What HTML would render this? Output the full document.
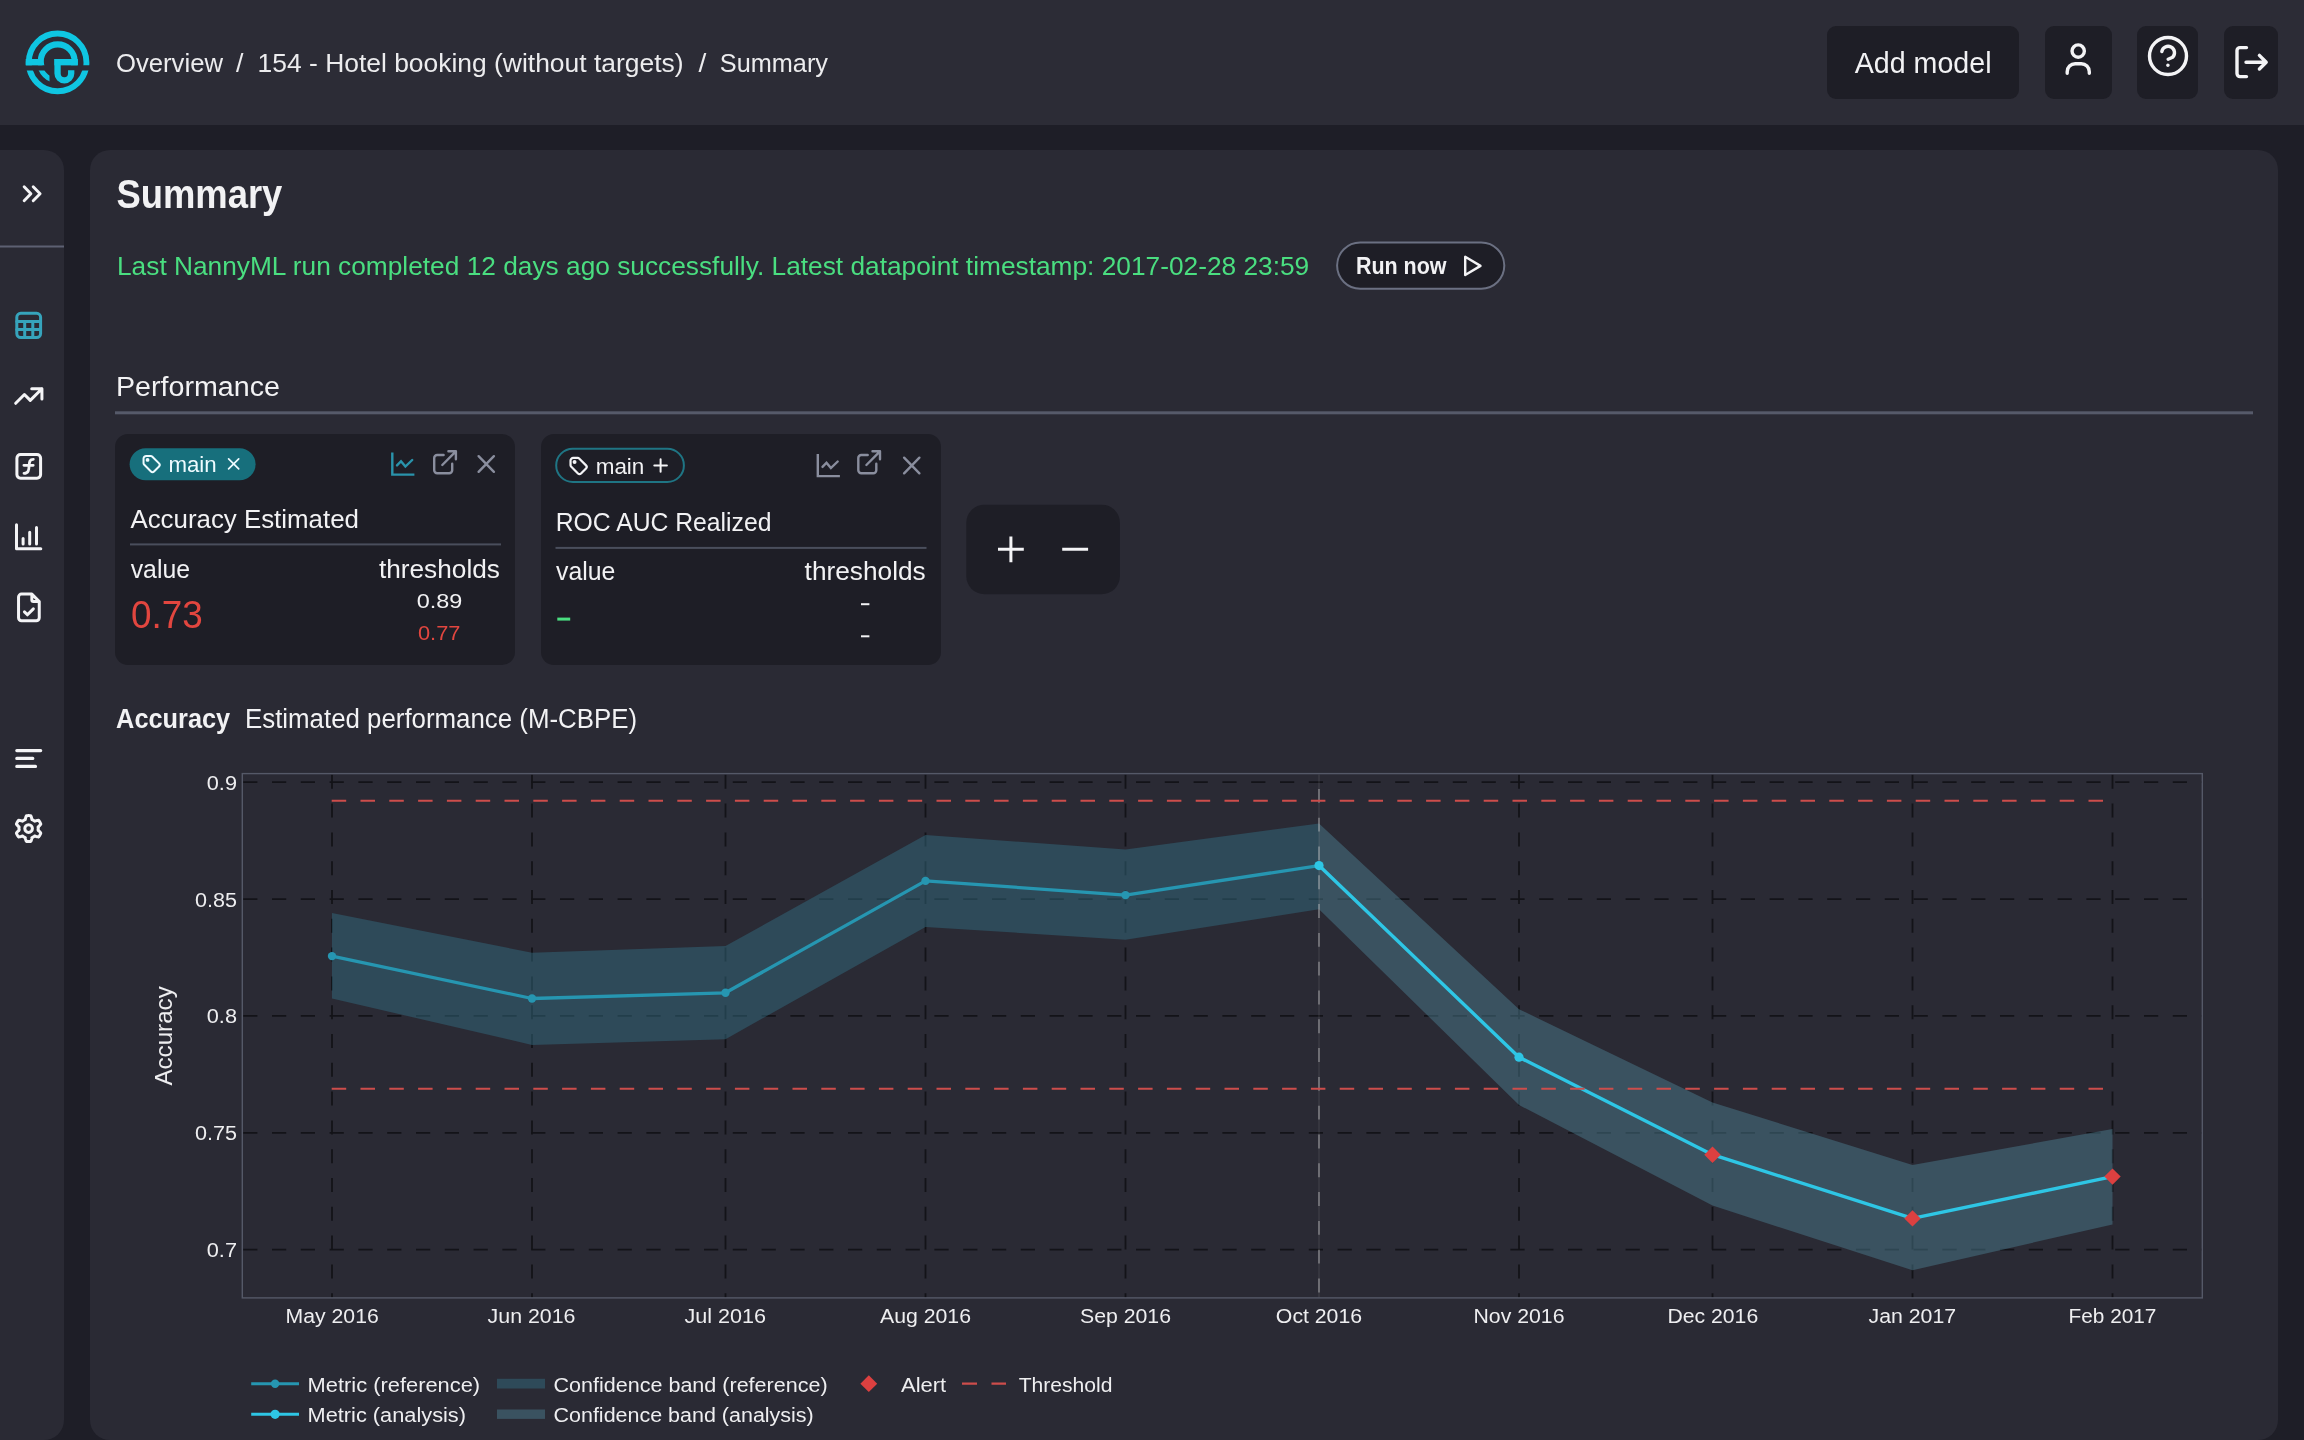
<!DOCTYPE html><html><head><meta charset="utf-8"><style>*{margin:0;padding:0}html,body{width:2304px;height:1440px;overflow:hidden;background:#1e1e27}svg{display:block;font-family:"Liberation Sans",sans-serif;will-change:transform}</style></head><body><svg width="2304" height="1440" viewBox="0 0 2304 1440">
<rect x="0" y="0" width="2304" height="1440" fill="#1e1e27"/>
<rect x="0" y="0" width="2304" height="125" fill="#2c2c36"/>
<rect x="-30" y="150" width="94" height="1290" rx="20" fill="#2a2a34"/>
<rect x="90" y="150" width="2188" height="1290" rx="20" fill="#2a2a34"/>
<defs><clipPath id="lgT"><rect x="0" y="0" width="110" height="65.35"/></clipPath><clipPath id="lgB"><rect x="0" y="70.45" width="110" height="60"/></clipPath><clipPath id="lgD"><rect x="0" y="70.45" width="49.5" height="60"/></clipPath></defs>
<g fill="none" stroke="#0fc6e2"><g clip-path="url(#lgT)"><circle cx="57.6" cy="62.4" r="28.85" stroke-width="5.9"/><circle cx="57.7" cy="61.4" r="16.95" stroke-width="6.2"/></g><g clip-path="url(#lgB)"><circle cx="57.6" cy="62.4" r="28.85" stroke-width="5.9"/></g><g clip-path="url(#lgD)"><circle cx="57.6" cy="62.4" r="17.9" stroke-width="5.2"/></g><path d="M57.55,59 V73.55 A6.82,6.82 0 0 0 71.2,73.55 V70.2" stroke-width="6.3"/></g><rect x="25.7" y="59" width="16.8" height="6.35" fill="#0fc6e2"/><rect x="54.4" y="59" width="23.5" height="6.35" fill="#0fc6e2"/>
<text x="116.00" y="72.30" font-size="26" fill="#ececee" textLength="106.94" lengthAdjust="spacingAndGlyphs">Overview</text>
<text x="236.00" y="72.30" font-size="26" fill="#ececee" textLength="7.44" lengthAdjust="spacingAndGlyphs">/</text>
<text x="257.60" y="72.30" font-size="26" fill="#ececee" textLength="425.90" lengthAdjust="spacingAndGlyphs">154 - Hotel booking (without targets)</text>
<text x="698.40" y="72.30" font-size="26" fill="#ececee" textLength="7.84" lengthAdjust="spacingAndGlyphs">/</text>
<text x="719.80" y="72.30" font-size="26" fill="#ececee" textLength="108.16" lengthAdjust="spacingAndGlyphs">Summary</text>
<rect x="1827" y="26" width="192" height="73" rx="9" fill="#1e1e26"/>
<rect x="2045" y="26" width="67" height="73" rx="9" fill="#1e1e26"/>
<rect x="2137" y="26" width="61" height="73" rx="9" fill="#1e1e26"/>
<rect x="2224" y="26" width="54" height="73" rx="9" fill="#1e1e26"/>
<text x="1854.70" y="73.40" font-size="29" fill="#f2f2f4" textLength="136.83" lengthAdjust="spacingAndGlyphs">Add model</text>
<g fill="none" stroke="#f4f4f6" stroke-width="3.4" stroke-linecap="round" stroke-linejoin="round"><circle cx="2078.2" cy="51.05" r="6.15"/><path d="M2067.2,73.3 V71.7 A8,8 0 0 1 2075.2,63.7 H2081.3 A8,8 0 0 1 2089.3,71.7 V73.3"/></g>
<g fill="none" stroke="#f4f4f6" stroke-width="3.4" stroke-linecap="round" stroke-linejoin="round"><circle cx="2168" cy="56" r="18.5"/><path d="M2161.8,51.6 A6.4,6.4 0 1 1 2172.6,57.3 L2168.1,59.2"/><path d="M2167.9,65.1 v0.2"/></g>
<g fill="none" stroke="#f4f4f6" stroke-width="3.4" stroke-linecap="round" stroke-linejoin="round"><path d="M2246.5,47.6 H2240 A3,3 0 0 0 2237,50.6 V73.6 A3,3 0 0 0 2240,76.6 H2246.5"/><path d="M2246,62.2 H2266.2 M2259.4,55.4 L2266.2,62.2 L2259.4,69"/></g>
<path d="M24.15,186.7 L30.9,193.7 L24.15,200.7 M33.2,186.7 L40.1,193.7 L33.2,200.7" fill="none" stroke="#f4f4f6" stroke-width="2.9" stroke-linecap="round" stroke-linejoin="round"/>
<rect x="0" y="245.5" width="64" height="2" fill="#5d6072"/>
<g fill="none" stroke="#36a4bc" stroke-width="3" stroke-linecap="round" stroke-linejoin="round"><rect x="16.8" y="313.3" width="23.8" height="24.2" rx="4"/><path d="M16.8,321.4 H40.6 M16.8,329.4 H40.6 M24.7,321.4 V337.5 M32.8,321.4 V337.5"/></g>
<g transform="translate(11.30,378.50) scale(1.4583)" fill="none" stroke="#f4f4f6" stroke-width="2.057" stroke-linecap="round" stroke-linejoin="round"><path d="M3 17l6 -6l4 4l8 -8 M14 7l7 0l0 7"/></g>
<g fill="none" stroke="#f4f4f6" stroke-width="3" stroke-linecap="round" stroke-linejoin="round"><rect x="16.9" y="454.6" width="23.7" height="23.6" rx="3.6"/><path d="M23.9,465.3 H33.2 M24,473.3 C28.4,473.3 28.9,470.2 29.1,466 C29.3,461.6 29.8,459.3 33.3,459.3" stroke-width="2.8"/></g>
<g fill="none" stroke="#f4f4f6" stroke-width="3" stroke-linecap="round" stroke-linejoin="round"><path d="M16.5,524.8 V548.8 H40.8 M23.1,538.5 V544 M29.7,532.3 V544 M36.5,527.5 V544"/></g>
<g transform="translate(11.15,589.65) scale(1.4792)" fill="none" stroke="#f4f4f6" stroke-width="2.028" stroke-linecap="round" stroke-linejoin="round"><path d="M14 3v4a1 1 0 0 0 1 1h4 M17 21h-10a2 2 0 0 1 -2 -2v-14a2 2 0 0 1 2 -2h7l5 5v11a2 2 0 0 1 -2 2z M9 15l2 2l4 -4"/></g>
<g fill="none" stroke="#f4f4f6" stroke-width="3.2" stroke-linecap="round"><path d="M16.8,750.6 H40.7 M16.8,758.4 H32.8 M16.8,766.4 H35.5"/></g>
<path d="M38.20,828.60 L38.20,828.77 L38.19,828.94 L38.19,829.10 L38.18,829.27 L38.16,829.44 L38.15,829.60 L38.13,829.77 L38.11,829.94 L38.08,830.10 L38.14,830.28 L38.40,830.51 L38.68,830.74 L38.96,830.99 L39.24,831.25 L39.51,831.52 L39.79,831.81 L40.05,832.10 L40.30,832.40 L40.53,832.71 L40.74,833.02 L40.74,833.26 L40.65,833.47 L40.57,833.68 L40.48,833.89 L40.38,834.09 L40.28,834.30 L40.18,834.50 L40.08,834.70 L39.97,834.90 L39.86,835.10 L39.74,835.30 L39.62,835.49 L39.50,835.68 L39.38,835.87 L39.25,836.06 L39.12,836.24 L38.98,836.42 L38.84,836.60 L38.70,836.78 L38.49,836.90 L38.12,836.88 L37.74,836.83 L37.36,836.76 L36.97,836.68 L36.59,836.59 L36.22,836.49 L35.85,836.37 L35.49,836.26 L35.15,836.14 L34.83,836.02 L34.64,836.06 L34.51,836.16 L34.38,836.27 L34.24,836.37 L34.11,836.46 L33.97,836.56 L33.83,836.65 L33.69,836.74 L33.54,836.83 L33.40,836.91 L33.25,837.00 L33.11,837.08 L32.96,837.15 L32.81,837.23 L32.66,837.30 L32.50,837.37 L32.35,837.44 L32.20,837.50 L32.04,837.56 L31.91,837.70 L31.85,838.04 L31.78,838.40 L31.71,838.76 L31.62,839.14 L31.52,839.51 L31.42,839.89 L31.29,840.26 L31.16,840.63 L31.01,840.98 L30.84,841.32 L30.63,841.44 L30.41,841.47 L30.18,841.50 L29.96,841.53 L29.73,841.55 L29.51,841.57 L29.28,841.58 L29.05,841.59 L28.83,841.60 L28.60,841.60 L28.37,841.60 L28.15,841.59 L27.92,841.58 L27.69,841.57 L27.47,841.55 L27.24,841.53 L27.02,841.50 L26.79,841.47 L26.57,841.44 L26.36,841.32 L26.19,840.98 L26.04,840.63 L25.91,840.26 L25.78,839.89 L25.68,839.51 L25.58,839.14 L25.49,838.76 L25.42,838.40 L25.35,838.04 L25.29,837.70 L25.16,837.56 L25.00,837.50 L24.85,837.44 L24.70,837.37 L24.54,837.30 L24.39,837.23 L24.24,837.15 L24.09,837.08 L23.95,837.00 L23.80,836.91 L23.66,836.83 L23.51,836.74 L23.37,836.65 L23.23,836.56 L23.09,836.46 L22.96,836.37 L22.82,836.27 L22.69,836.16 L22.56,836.06 L22.37,836.02 L22.05,836.14 L21.71,836.26 L21.35,836.37 L20.98,836.49 L20.61,836.59 L20.23,836.68 L19.84,836.76 L19.46,836.83 L19.08,836.88 L18.71,836.90 L18.50,836.78 L18.36,836.60 L18.22,836.42 L18.08,836.24 L17.95,836.06 L17.82,835.87 L17.70,835.68 L17.58,835.49 L17.46,835.30 L17.34,835.10 L17.23,834.90 L17.12,834.70 L17.02,834.50 L16.92,834.30 L16.82,834.09 L16.72,833.89 L16.63,833.68 L16.55,833.47 L16.46,833.26 L16.46,833.02 L16.67,832.71 L16.90,832.40 L17.15,832.10 L17.41,831.81 L17.69,831.52 L17.96,831.25 L18.24,830.99 L18.52,830.74 L18.80,830.51 L19.06,830.28 L19.12,830.10 L19.09,829.94 L19.07,829.77 L19.05,829.60 L19.04,829.44 L19.02,829.27 L19.01,829.10 L19.01,828.94 L19.00,828.77 L19.00,828.60 L19.00,828.43 L19.01,828.26 L19.01,828.10 L19.02,827.93 L19.04,827.76 L19.05,827.60 L19.07,827.43 L19.09,827.26 L19.12,827.10 L19.06,826.92 L18.80,826.69 L18.52,826.46 L18.24,826.21 L17.96,825.95 L17.69,825.68 L17.41,825.39 L17.15,825.10 L16.90,824.80 L16.67,824.49 L16.46,824.18 L16.46,823.94 L16.55,823.73 L16.63,823.52 L16.72,823.31 L16.82,823.11 L16.92,822.90 L17.02,822.70 L17.12,822.50 L17.23,822.30 L17.34,822.10 L17.46,821.90 L17.58,821.71 L17.70,821.52 L17.82,821.33 L17.95,821.14 L18.08,820.96 L18.22,820.78 L18.36,820.60 L18.50,820.42 L18.71,820.30 L19.08,820.32 L19.46,820.37 L19.84,820.44 L20.23,820.52 L20.61,820.61 L20.98,820.71 L21.35,820.83 L21.71,820.94 L22.05,821.06 L22.37,821.18 L22.56,821.14 L22.69,821.04 L22.82,820.93 L22.96,820.83 L23.09,820.74 L23.23,820.64 L23.37,820.55 L23.51,820.46 L23.66,820.37 L23.80,820.29 L23.95,820.20 L24.09,820.12 L24.24,820.05 L24.39,819.97 L24.54,819.90 L24.70,819.83 L24.85,819.76 L25.00,819.70 L25.16,819.64 L25.29,819.50 L25.35,819.16 L25.42,818.80 L25.49,818.44 L25.58,818.06 L25.68,817.69 L25.78,817.31 L25.91,816.94 L26.04,816.57 L26.19,816.22 L26.36,815.88 L26.57,815.76 L26.79,815.73 L27.02,815.70 L27.24,815.67 L27.47,815.65 L27.69,815.63 L27.92,815.62 L28.15,815.61 L28.37,815.60 L28.60,815.60 L28.83,815.60 L29.05,815.61 L29.28,815.62 L29.51,815.63 L29.73,815.65 L29.96,815.67 L30.18,815.70 L30.41,815.73 L30.63,815.76 L30.84,815.88 L31.01,816.22 L31.16,816.57 L31.29,816.94 L31.42,817.31 L31.52,817.69 L31.62,818.06 L31.71,818.44 L31.78,818.80 L31.85,819.16 L31.91,819.50 L32.04,819.64 L32.20,819.70 L32.35,819.76 L32.50,819.83 L32.66,819.90 L32.81,819.97 L32.96,820.05 L33.11,820.12 L33.25,820.20 L33.40,820.29 L33.54,820.37 L33.69,820.46 L33.83,820.55 L33.97,820.64 L34.11,820.74 L34.24,820.83 L34.38,820.93 L34.51,821.04 L34.64,821.14 L34.83,821.18 L35.15,821.06 L35.49,820.94 L35.85,820.83 L36.22,820.71 L36.59,820.61 L36.97,820.52 L37.36,820.44 L37.74,820.37 L38.12,820.32 L38.49,820.30 L38.70,820.42 L38.84,820.60 L38.98,820.78 L39.12,820.96 L39.25,821.14 L39.38,821.33 L39.50,821.52 L39.62,821.71 L39.74,821.90 L39.86,822.10 L39.97,822.30 L40.08,822.50 L40.18,822.70 L40.28,822.90 L40.38,823.11 L40.48,823.31 L40.57,823.52 L40.65,823.73 L40.74,823.94 L40.74,824.18 L40.53,824.49 L40.30,824.80 L40.05,825.10 L39.79,825.39 L39.51,825.68 L39.24,825.95 L38.96,826.21 L38.68,826.46 L38.40,826.69 L38.14,826.92 L38.08,827.10 L38.11,827.26 L38.13,827.43 L38.15,827.60 L38.16,827.76 L38.18,827.93 L38.19,828.10 L38.19,828.26 L38.20,828.43 L38.20,828.60Z" fill="none" stroke="#f4f4f6" stroke-width="3" stroke-linejoin="round"/>
<circle cx="28.6" cy="828.6" r="3.8" fill="none" stroke="#f4f4f6" stroke-width="3"/>
<text x="116.40" y="208.30" font-size="40" fill="#f2f2f4" font-weight="bold" textLength="165.91" lengthAdjust="spacingAndGlyphs">Summary</text>
<text x="117.00" y="275.20" font-size="26" fill="#4ade80" textLength="1192.22" lengthAdjust="spacingAndGlyphs">Last NannyML run completed 12 days ago successfully. Latest datapoint timestamp: 2017-02-28 23:59</text>
<rect x="1337.1" y="242.5" width="167.2" height="46.2" rx="23.1" fill="#1e1e26" stroke="#6b7082" stroke-width="2"/>
<text x="1355.90" y="274.10" font-size="24" fill="#f2f2f4" font-weight="bold" textLength="90.62" lengthAdjust="spacingAndGlyphs">Run now</text>
<path d="M1465.2,256.8 V275 L1480.5,265.9 Z" fill="none" stroke="#f4f4f6" stroke-width="2.4" stroke-linejoin="round"/>
<text x="116.00" y="396.00" font-size="27" fill="#f2f2f4" textLength="164.00" lengthAdjust="spacingAndGlyphs">Performance</text>
<rect x="115" y="411.3" width="2138" height="3" fill="#565a6a"/>
<rect x="115" y="434" width="400" height="231" rx="13" fill="#1e1e26"/>
<rect x="541" y="434" width="400" height="231" rx="13" fill="#1e1e26"/>
<rect x="129.6" y="448.2" width="126" height="32" rx="16" fill="#176f7c"/>
<g transform="translate(140.85,453.25) scale(0.8958)" fill="none" stroke="#eefbff" stroke-width="2.233" stroke-linecap="round" stroke-linejoin="round"><path d="M7.5 7.5m-1 0a1 1 0 1 0 2 0a1 1 0 1 0 -2 0 M3 6v5.172a2 2 0 0 0 .586 1.414l7.71 7.71a2.41 2.41 0 0 0 3.408 0l5.592 -5.592a2.41 2.41 0 0 0 0 -3.408l-7.71 -7.71a2 2 0 0 0 -1.414 -.586h-5.172a3 3 0 0 0 -3 3z"/></g>
<text x="168.40" y="472.20" font-size="22" fill="#eefbff" textLength="48.25" lengthAdjust="spacingAndGlyphs">main</text>
<path d="M228.6,458.8 L238.7,468.9 M238.7,458.8 L228.6,468.9" stroke="#eefbff" stroke-width="1.7" stroke-linecap="round"/>
<g fill="none" stroke="#2a93ab" stroke-width="2.4" stroke-linecap="butt" stroke-linejoin="miter"><path d="M392.3,452.4 V474.6 H414.4"/><path d="M397,465.4 L401,461.2 L405.4,466.6 L412.2,460" stroke-linecap="round"/></g>
<g fill="none" stroke="#8a8e9e" stroke-width="2.4" stroke-linecap="round" stroke-linejoin="round"><path d="M443.6,455 H437.2 A3,3 0 0 0 434.2,458 V470.3 A3,3 0 0 0 437.2,473.3 H449.2 A3,3 0 0 0 452.2,470.3 V463.7"/><path d="M442.3,465 L455.6,451.7 M448.4,451.3 H455.9 V459.3"/><path d="M478.6,456.2 L493.9,471.8 M493.9,456.2 L478.6,471.8"/></g>
<text x="130.40" y="528.20" font-size="26" fill="#f2f2f4" textLength="228.54" lengthAdjust="spacingAndGlyphs">Accuracy Estimated</text>
<rect x="130" y="543.4" width="371" height="2" fill="#4a4e5c"/>
<text x="130.70" y="577.80" font-size="25" fill="#f2f2f4" textLength="59.32" lengthAdjust="spacingAndGlyphs">value</text>
<text x="378.90" y="577.80" font-size="26" fill="#f2f2f4" textLength="121.07" lengthAdjust="spacingAndGlyphs">thresholds</text>
<text x="131.00" y="627.80" font-size="38" fill="#e2463f" textLength="71.75" lengthAdjust="spacingAndGlyphs">0.73</text>
<text x="416.70" y="607.80" font-size="21" fill="#f2f2f4" textLength="45.53" lengthAdjust="spacingAndGlyphs">0.89</text>
<text x="418.00" y="640.00" font-size="21" fill="#e2463f" textLength="42.43" lengthAdjust="spacingAndGlyphs">0.77</text>
<rect x="556.2" y="448.8" width="127.7" height="33.2" rx="16.6" fill="none" stroke="#1f7584" stroke-width="2"/>
<g transform="translate(567.85,455.25) scale(0.8958)" fill="none" stroke="#f4f4f6" stroke-width="2.456" stroke-linecap="round" stroke-linejoin="round"><path d="M7.5 7.5m-1 0a1 1 0 1 0 2 0a1 1 0 1 0 -2 0 M3 6v5.172a2 2 0 0 0 .586 1.414l7.71 7.71a2.41 2.41 0 0 0 3.408 0l5.592 -5.592a2.41 2.41 0 0 0 0 -3.408l-7.71 -7.71a2 2 0 0 0 -1.414 -.586h-5.172a3 3 0 0 0 -3 3z"/></g>
<text x="595.70" y="473.70" font-size="22" fill="#f2f2f4" textLength="48.65" lengthAdjust="spacingAndGlyphs">main</text>
<path d="M660.6,459.2 V471.8 M654.3,465.5 H666.9" stroke="#f4f4f6" stroke-width="2" stroke-linecap="round"/>
<g fill="none" stroke="#8a8e9e" stroke-width="2.4" stroke-linecap="butt" stroke-linejoin="miter"><path d="M817.8,453.9 V476.1 H839.9"/><path d="M822.5,466.9 L826.5,462.7 L830.9,468.1 L837.7,461.5" stroke-linecap="round"/></g>
<g fill="none" stroke="#8a8e9e" stroke-width="2.4" stroke-linecap="round" stroke-linejoin="round"><path d="M867.7,455 H861.3 A3,3 0 0 0 858.3,458 V470.3 A3,3 0 0 0 861.3,473.3 H873.3 A3,3 0 0 0 876.3,470.3 V463.7"/><path d="M866.4000000000001,465 L879.7,451.7 M872.5,451.3 H880.0 V459.3"/><path d="M904.1,457.7 L919.4,473.3 M919.4,457.7 L904.1,473.3"/></g>
<text x="555.70" y="531.20" font-size="26" fill="#f2f2f4" textLength="215.81" lengthAdjust="spacingAndGlyphs">ROC AUC Realized</text>
<rect x="555.5" y="546.9" width="371" height="2" fill="#4a4e5c"/>
<text x="556.00" y="580.20" font-size="25" fill="#f2f2f4" textLength="59.32" lengthAdjust="spacingAndGlyphs">value</text>
<text x="804.60" y="580.20" font-size="26" fill="#f2f2f4" textLength="121.17" lengthAdjust="spacingAndGlyphs">thresholds</text>
<rect x="557.3" y="617.6" width="12.9" height="3" fill="#4ade80"/>
<rect x="861" y="603.2" width="8.4" height="2" fill="#f2f2f4"/>
<rect x="861" y="635.3" width="8.4" height="2" fill="#f2f2f4"/>
<rect x="966.3" y="504.7" width="153.6" height="89.5" rx="18" fill="#1e1e26"/>
<path d="M1010.9,536.5 V562.2 M998,549.3 H1023.8 M1062.2,549.3 H1088.1" stroke="#f4f4f6" stroke-width="3" stroke-linecap="butt"/>
<text x="116.10" y="727.80" font-size="27" fill="#f2f2f4" font-weight="bold" textLength="114.05" lengthAdjust="spacingAndGlyphs">Accuracy</text>
<text x="245.00" y="727.80" font-size="27" fill="#f2f2f4" textLength="392.04" lengthAdjust="spacingAndGlyphs">Estimated performance (M-CBPE)</text>
<line x1="243.2" y1="782.2" x2="2202.3" y2="782.2" stroke="#131318" stroke-width="1.8" stroke-dasharray="14.2 14.6"/>
<line x1="243.2" y1="899.1" x2="2202.3" y2="899.1" stroke="#131318" stroke-width="1.8" stroke-dasharray="14.2 14.6"/>
<line x1="243.2" y1="1015.95" x2="2202.3" y2="1015.95" stroke="#131318" stroke-width="1.8" stroke-dasharray="14.2 14.6"/>
<line x1="243.2" y1="1132.8" x2="2202.3" y2="1132.8" stroke="#131318" stroke-width="1.8" stroke-dasharray="14.2 14.6"/>
<line x1="243.2" y1="1249.7" x2="2202.3" y2="1249.7" stroke="#131318" stroke-width="1.8" stroke-dasharray="14.2 14.6"/>
<line x1="332.0" y1="774.8" x2="332.0" y2="1297.9" stroke="#131318" stroke-width="1.8" stroke-dasharray="14.0 14.8"/>
<line x1="532.0" y1="774.8" x2="532.0" y2="1297.9" stroke="#131318" stroke-width="1.8" stroke-dasharray="14.0 14.8"/>
<line x1="725.5" y1="774.8" x2="725.5" y2="1297.9" stroke="#131318" stroke-width="1.8" stroke-dasharray="14.0 14.8"/>
<line x1="925.5" y1="774.8" x2="925.5" y2="1297.9" stroke="#131318" stroke-width="1.8" stroke-dasharray="14.0 14.8"/>
<line x1="1125.5" y1="774.8" x2="1125.5" y2="1297.9" stroke="#131318" stroke-width="1.8" stroke-dasharray="14.0 14.8"/>
<line x1="1519.0" y1="774.8" x2="1519.0" y2="1297.9" stroke="#131318" stroke-width="1.8" stroke-dasharray="14.0 14.8"/>
<line x1="1712.5" y1="774.8" x2="1712.5" y2="1297.9" stroke="#131318" stroke-width="1.8" stroke-dasharray="14.0 14.8"/>
<line x1="1912.5" y1="774.8" x2="1912.5" y2="1297.9" stroke="#131318" stroke-width="1.8" stroke-dasharray="14.0 14.8"/>
<line x1="2112.5" y1="774.8" x2="2112.5" y2="1297.9" stroke="#131318" stroke-width="1.8" stroke-dasharray="14.0 14.8"/>
<polygon points="332.0,913.1 532.0,952.7 725.5,946.1 925.5,835.0 1125.5,849.6 1319.0,823.5 1319.0,909.2 1125.5,939.8 925.5,926.9 725.5,1039.2 532.0,1044.9 332.0,998.5" fill="#326a7e" fill-opacity="0.5"/>
<polygon points="1319.0,823.5 1519.0,1009.2 1712.5,1102.5 1912.5,1165.0 2112.5,1129.0 2112.5,1224.4 1912.5,1270.3 1712.5,1205.6 1519.0,1105.0 1319.0,909.2" fill="#4a7a8c" fill-opacity="0.5"/>
<line x1="1319" y1="774.5" x2="1319" y2="1297.9" stroke="#909090" stroke-opacity="0.13" stroke-width="1.8"/>
<line x1="1319" y1="788.9" x2="1319" y2="1297.9" stroke="#d4d4d4" stroke-opacity="0.42" stroke-width="1.7" stroke-dasharray="13.9 14.9"/>
<rect x="242.3" y="773.6" width="1960.0000000000002" height="524.3000000000001" fill="none" stroke="#555968" stroke-width="1.4"/>
<polyline points="332.0,956.1 532.0,998.5 725.5,992.8 925.5,880.9 1125.5,895.1 1319.0,865.6" fill="none" stroke="#2696b1" stroke-width="3.3" stroke-linejoin="round"/>
<polyline points="1319.0,865.6 1519.0,1057.2 1712.5,1154.7 1912.5,1218.4 2112.5,1176.6" fill="none" stroke="#2ec6e5" stroke-width="3.4" stroke-linejoin="round"/>
<circle cx="332.0" cy="956.1" r="4.2" fill="#2696b1"/>
<circle cx="532.0" cy="998.5" r="4.2" fill="#2696b1"/>
<circle cx="725.5" cy="992.8" r="4.2" fill="#2696b1"/>
<circle cx="925.5" cy="880.9" r="4.2" fill="#2696b1"/>
<circle cx="1125.5" cy="895.1" r="4.2" fill="#2696b1"/>
<circle cx="1319.0" cy="865.6" r="4.6" fill="#2ec6e5"/>
<circle cx="1519.0" cy="1057.2" r="4.6" fill="#2ec6e5"/>
<line x1="331.7" y1="800.7" x2="2112.5" y2="800.7" stroke="#cd4d4b" stroke-width="2.1" stroke-dasharray="14.5 14.3"/>
<line x1="331.7" y1="1088.8" x2="2112.5" y2="1088.8" stroke="#cd4d4b" stroke-width="2.1" stroke-dasharray="14.5 14.3"/>
<path d="M1712.5,1146.5 L1720.7,1154.7 L1712.5,1162.9 L1704.3,1154.7 Z" fill="#dc4040"/>
<path d="M1912.5,1210.2 L1920.7,1218.4 L1912.5,1226.6000000000001 L1904.3,1218.4 Z" fill="#dc4040"/>
<path d="M2112.5,1168.3999999999999 L2120.7,1176.6 L2112.5,1184.8 L2104.3,1176.6 Z" fill="#dc4040"/>
<text x="206.80" y="789.60" font-size="20" fill="#eeeef0" textLength="30.20" lengthAdjust="spacingAndGlyphs">0.9</text>
<text x="195.05" y="906.50" font-size="20" fill="#eeeef0" textLength="41.98" lengthAdjust="spacingAndGlyphs">0.85</text>
<text x="206.80" y="1023.35" font-size="20" fill="#eeeef0" textLength="30.20" lengthAdjust="spacingAndGlyphs">0.8</text>
<text x="195.05" y="1140.20" font-size="20" fill="#eeeef0" textLength="41.98" lengthAdjust="spacingAndGlyphs">0.75</text>
<text x="206.80" y="1257.10" font-size="20" fill="#eeeef0" textLength="30.20" lengthAdjust="spacingAndGlyphs">0.7</text>
<text x="285.60" y="1322.60" font-size="20" fill="#eeeef0" textLength="93.14" lengthAdjust="spacingAndGlyphs">May 2016</text>
<text x="487.60" y="1322.60" font-size="20" fill="#eeeef0" textLength="87.90" lengthAdjust="spacingAndGlyphs">Jun 2016</text>
<text x="684.40" y="1322.60" font-size="20" fill="#eeeef0" textLength="81.62" lengthAdjust="spacingAndGlyphs">Jul 2016</text>
<text x="880.04" y="1322.60" font-size="20" fill="#eeeef0" textLength="90.96" lengthAdjust="spacingAndGlyphs">Aug 2016</text>
<text x="1080.04" y="1322.60" font-size="20" fill="#eeeef0" textLength="90.96" lengthAdjust="spacingAndGlyphs">Sep 2016</text>
<text x="1275.87" y="1322.60" font-size="20" fill="#eeeef0" textLength="86.21" lengthAdjust="spacingAndGlyphs">Oct 2016</text>
<text x="1473.54" y="1322.60" font-size="20" fill="#eeeef0" textLength="90.94" lengthAdjust="spacingAndGlyphs">Nov 2016</text>
<text x="1667.40" y="1322.60" font-size="20" fill="#eeeef0" textLength="90.82" lengthAdjust="spacingAndGlyphs">Dec 2016</text>
<text x="1868.50" y="1322.60" font-size="20" fill="#eeeef0" textLength="87.60" lengthAdjust="spacingAndGlyphs">Jan 2017</text>
<text x="2068.50" y="1322.60" font-size="20" fill="#eeeef0" textLength="87.91" lengthAdjust="spacingAndGlyphs">Feb 2017</text>
<g transform="rotate(-90 171.6 1085.6)"><text x="171.60" y="1085.60" font-size="23" fill="#eeeef0" textLength="99.36" lengthAdjust="spacingAndGlyphs">Accuracy</text></g>
<line x1="251.2" y1="1383.7" x2="299" y2="1383.7" stroke="#2696b1" stroke-width="3"/><circle cx="275.1" cy="1383.7" r="4.2" fill="#2696b1"/>
<line x1="251.2" y1="1414.3" x2="299" y2="1414.3" stroke="#2ec6e5" stroke-width="3"/><circle cx="275.1" cy="1414.3" r="4.6" fill="#2ec6e5"/>
<text x="307.60" y="1391.70" font-size="20" fill="#eeeef0" textLength="172.52" lengthAdjust="spacingAndGlyphs">Metric (reference)</text>
<text x="307.60" y="1422.30" font-size="20" fill="#eeeef0" textLength="158.38" lengthAdjust="spacingAndGlyphs">Metric (analysis)</text>
<rect x="497" y="1378.8" width="48" height="9.7" fill="#2e4a59"/>
<rect x="497" y="1409.5" width="48" height="9.4" fill="#3a5260"/>
<text x="553.50" y="1391.70" font-size="20" fill="#eeeef0" textLength="274.11" lengthAdjust="spacingAndGlyphs">Confidence band (reference)</text>
<text x="553.50" y="1422.30" font-size="20" fill="#eeeef0" textLength="260.27" lengthAdjust="spacingAndGlyphs">Confidence band (analysis)</text>
<path d="M868.8,1375.3 L877.1999999999999,1383.7 L868.8,1392.1000000000001 L860.4,1383.7 Z" fill="#dc4040"/>
<text x="901.00" y="1391.70" font-size="20" fill="#eeeef0" textLength="45.23" lengthAdjust="spacingAndGlyphs">Alert</text>
<path d="M962,1383.7 H977 M991.5,1383.7 H1006" stroke="#cd4d4b" stroke-width="2.2"/>
<text x="1018.70" y="1391.70" font-size="20" fill="#eeeef0" textLength="93.74" lengthAdjust="spacingAndGlyphs">Threshold</text>
</svg></body></html>
